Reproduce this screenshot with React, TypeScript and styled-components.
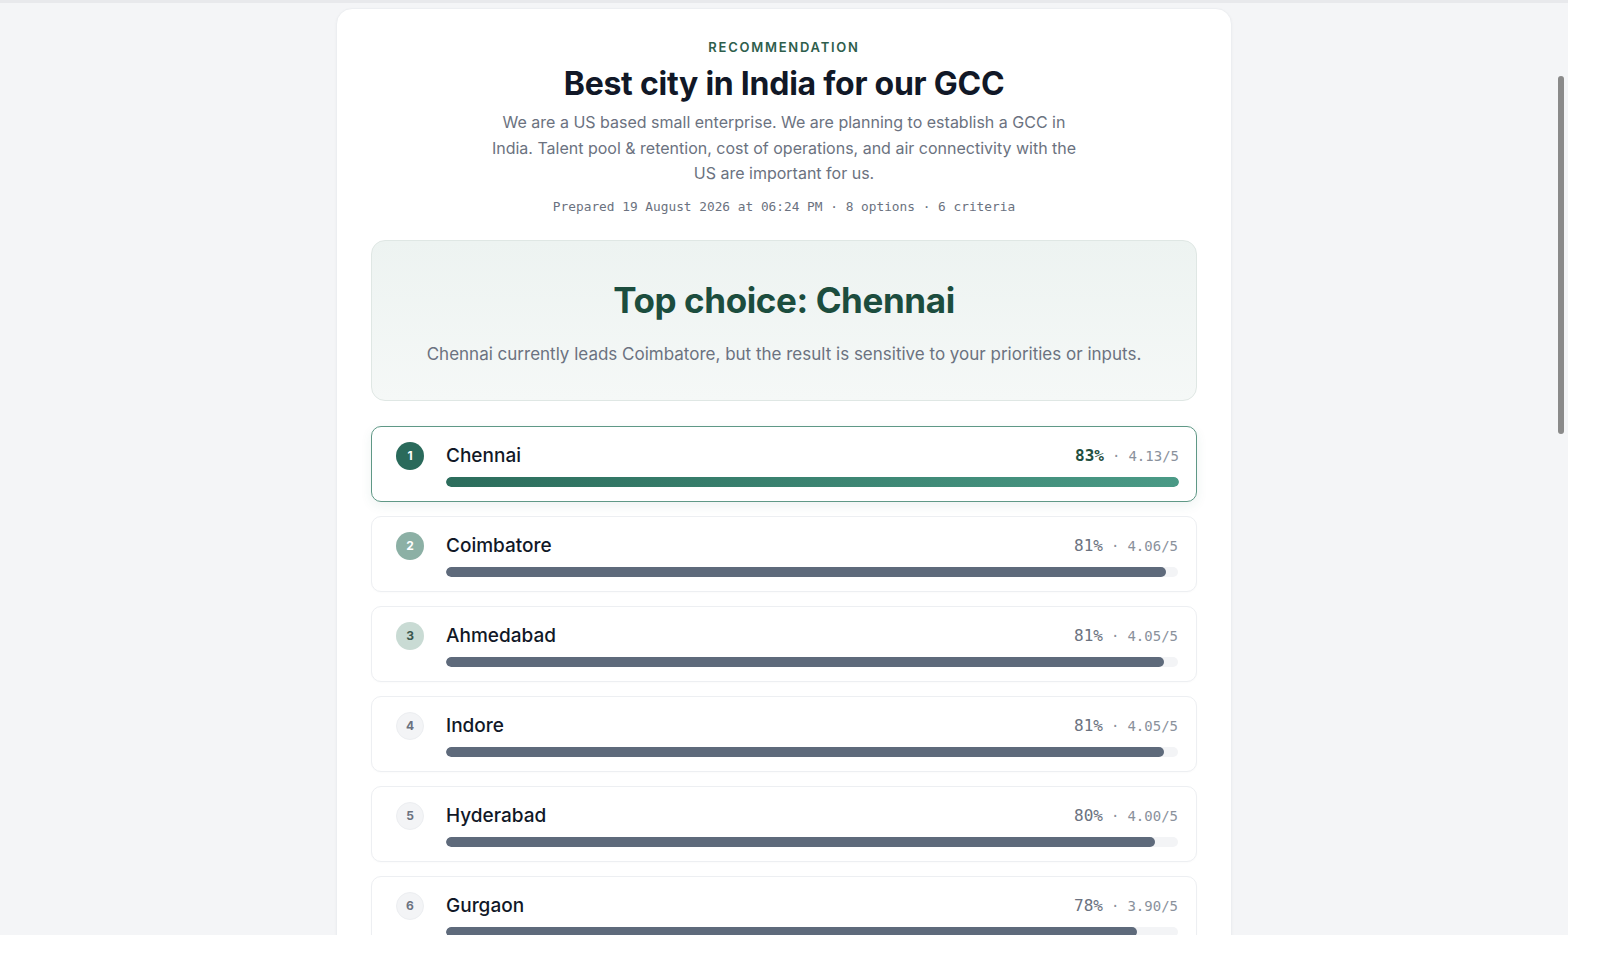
import styled, { createGlobalStyle } from "styled-components";

const GlobalStyle = createGlobalStyle`
  html, body {
    margin: 0;
    padding: 0;
    background: #ffffff;
  }
  * {
    box-sizing: border-box;
  }
`;

interface City {
  name: string;
  percent: number;
  score: number;
}

const cities: City[] = [
  { name: "Chennai", percent: 83, score: 4.13 },
  { name: "Coimbatore", percent: 81, score: 4.06 },
  { name: "Ahmedabad", percent: 81, score: 4.05 },
  { name: "Indore", percent: 81, score: 4.05 },
  { name: "Hyderabad", percent: 80, score: 4.0 },
  { name: "Gurgaon", percent: 78, score: 3.9 },
  { name: "Pune", percent: 77, score: 3.85 },
  { name: "Bengaluru", percent: 76, score: 3.8 },
];

const badgeColors = [
  { bg: "#2a6a5b", fg: "#ffffff" },
  { bg: "#8cb0a5", fg: "#ffffff" },
  { bg: "#c9dbd4", fg: "#3b584f" },
];

const Frame = styled.div`
  position: relative;
  width: 1568px;
  height: 935px;
  overflow: hidden;
  background: #f4f5f7;
  border-top: 3px solid #e8e9ec;
  font-family: Inter, "Noto Sans", sans-serif;
`;

const Page = styled.div`
  padding-top: 5px;
`;

const Card = styled.div`
  width: 896px;
  margin: 0 auto;
  background: #ffffff;
  border: 1px solid #eceef1;
  border-radius: 16px;
  box-shadow: 0 1px 3px rgba(17, 24, 39, 0.04);
  padding: 30px 34px 40px;
  text-align: center;
`;

const Eyebrow = styled.div`
  font-size: 13px;
  line-height: 16px;
  font-weight: 600;
  letter-spacing: 1.75px;
  color: #2e5e4c;
`;

const Title = styled.h1`
  margin: 9px 0 0;
  font-size: 32px;
  line-height: 40px;
  font-weight: 700;
  letter-spacing: -0.25px;
  color: #111827;
`;

const Description = styled.p`
  margin: 6px auto 0;
  max-width: 600px;
  font-size: 16px;
  line-height: 25.6px;
  color: #6b7280;
`;

const Meta = styled.div`
  margin-top: 11px;
  font-family: "DejaVu Sans Mono", "Liberation Mono", monospace;
  font-size: 12.8px;
  line-height: 18px;
  color: #6b7280;
`;

const TopChoice = styled.div`
  margin-top: 24px;
  border: 1px solid #dfe7e4;
  border-radius: 14px;
  background: linear-gradient(180deg, #edf3f1 0%, #f5f8f7 100%);
  padding: 37px 24px 34px;
`;

const TopTitle = styled.h2`
  margin: 0;
  font-size: 35px;
  line-height: 44px;
  font-weight: 700;
  letter-spacing: -0.4px;
  color: #1c4d3e;
`;

const TopText = styled.p`
  margin: 20px 0 0;
  font-size: 17px;
  line-height: 24px;
  color: #6b7280;
`;

const List = styled.div`
  margin-top: 25px;
  display: flex;
  flex-direction: column;
  gap: 14px;
  text-align: left;
`;

const Row = styled.div<{ $top: boolean }>`
  display: grid;
  grid-template-columns: 28px 1fr;
  column-gap: 22px;
  row-gap: 7px;
  align-items: center;
  padding: ${(p) => (p.$top ? "15px 17px 14px 24px" : "15px 18px 14px 24px")};
  border: ${(p) => (p.$top ? "1.5px solid #5f9886" : "1px solid #edeff2")};
  border-radius: 10px;
  background: #ffffff;
  box-shadow: ${(p) =>
    p.$top ? "0 4px 12px rgba(42, 106, 91, 0.08)" : "0 1px 2px rgba(17, 24, 39, 0.02)"};
`;

const Badge = styled.div<{ $bg: string; $fg: string; $plain: boolean }>`
  width: 28px;
  height: 28px;
  border-radius: 50%;
  background: ${(p) => p.$bg};
  color: ${(p) => p.$fg};
  border: ${(p) => (p.$plain ? "1px solid #eceef1" : "none")};
  display: flex;
  align-items: center;
  justify-content: center;
  font-size: 12px;
  font-weight: 700;
`;

const Header = styled.div`
  display: flex;
  align-items: center;
  justify-content: space-between;
`;

const Name = styled.div`
  font-size: 19px;
  line-height: 26px;
  font-weight: 500;
  color: #111827;
`;

const Score = styled.div`
  display: flex;
  align-items: baseline;
  gap: 8px;
  font-family: "DejaVu Sans Mono", "Liberation Mono", monospace;
  color: #8a919c;
  font-size: 14px;
`;

const Percent = styled.span<{ $top: boolean }>`
  font-size: 16px;
  font-weight: ${(p) => (p.$top ? 700 : 500)};
  color: ${(p) => (p.$top ? "#1f4f40" : "#6b7280")};
`;

const Track = styled.div`
  grid-column: 2;
  height: 10px;
  border-radius: 5px;
  background: #f3f4f6;
  overflow: hidden;
`;

const Fill = styled.div<{ $top: boolean }>`
  height: 100%;
  border-radius: 5px;
  background: ${(p) =>
    p.$top ? "linear-gradient(90deg, #2c6d5c 0%, #4a9a86 100%)" : "#5e6a7b"};
`;

const Scrollbar = styled.div`
  position: absolute;
  top: 73px;
  right: 4px;
  width: 6px;
  height: 358px;
  border-radius: 3px;
  background: #8a8a8a;
`;

const App = () => {
  const best = cities[0].score;

  return (
    <>
      <GlobalStyle />
      <Frame>
        <Page>
          <Card>
            <Eyebrow>RECOMMENDATION</Eyebrow>
            <Title>Best city in India for our GCC</Title>
            <Description>
              We are a US based small enterprise. We are planning to establish a GCC in India.
              Talent pool &amp; retention, cost of operations, and air connectivity with the US
              are important for us.
            </Description>
            <Meta>Prepared 19 August 2026 at 06:24 PM · 8 options · 6 criteria</Meta>

            <TopChoice>
              <TopTitle>Top choice: Chennai</TopTitle>
              <TopText>
                Chennai currently leads Coimbatore, but the result is sensitive to your priorities
                or inputs.
              </TopText>
            </TopChoice>

            <List>
              {cities.map((city, i) => {
                const top = i === 0;
                const colors = badgeColors[i] || { bg: "#f3f4f6", fg: "#6b7280" };
                return (
                  <Row key={city.name} $top={top}>
                    <Badge $bg={colors.bg} $fg={colors.fg} $plain={i > 2}>
                      {i + 1}
                    </Badge>
                    <Header>
                      <Name>{city.name}</Name>
                      <Score>
                        <Percent $top={top}>{city.percent}%</Percent>
                        <span>·</span>
                        <span>{city.score.toFixed(2)}/5</span>
                      </Score>
                    </Header>
                    <Track>
                      <Fill $top={top} style={{ width: `${(city.score / best) * 100}%` }} />
                    </Track>
                  </Row>
                );
              })}
            </List>
          </Card>
        </Page>
        <Scrollbar />
      </Frame>
    </>
  );
};

export default App;
